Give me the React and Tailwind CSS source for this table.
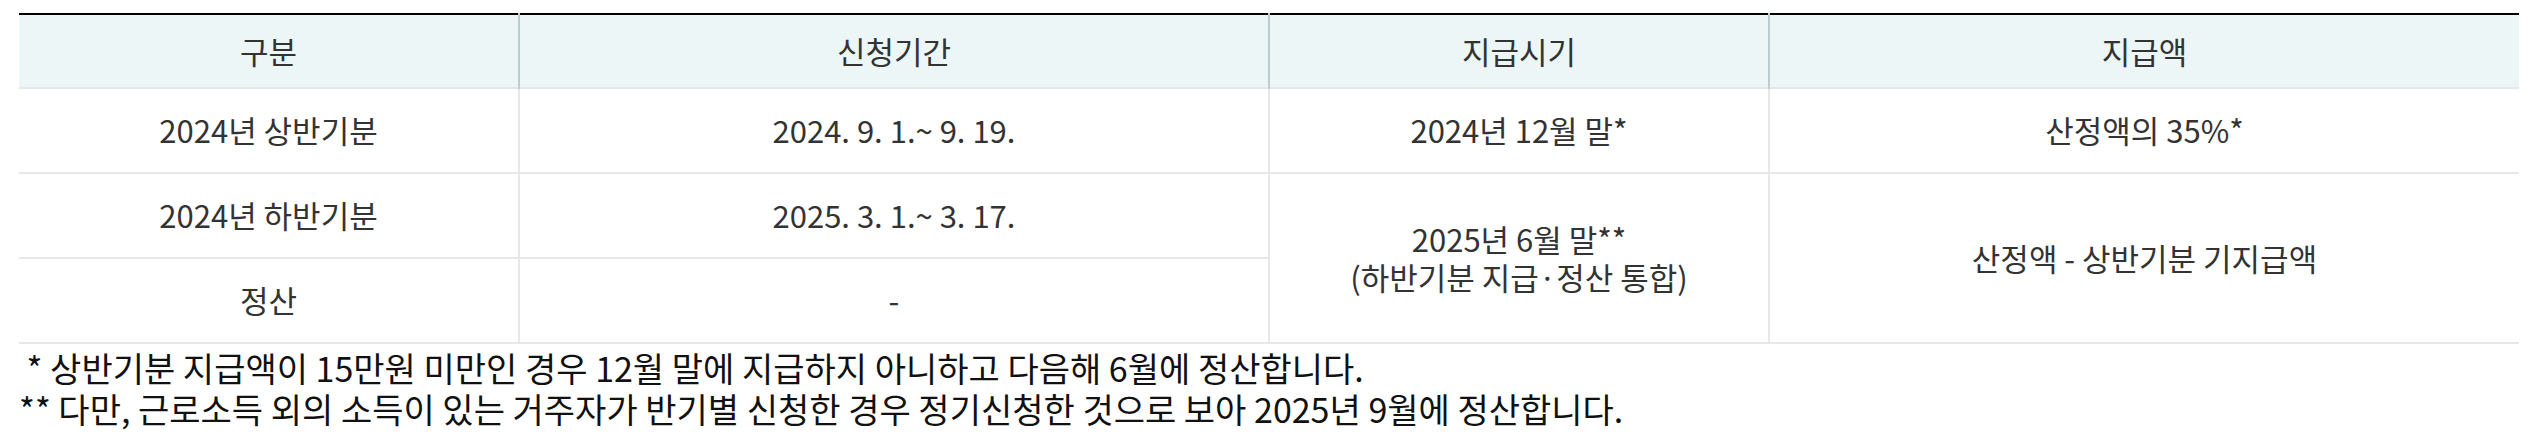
import React from "react";

const font = { fontFamily: '"Noto Sans CJK KR", "Noto Sans", sans-serif' };

export default function App() {
  const th =
    "h-[74px] border-x-2 border-[#bdcbd3] first:border-l-0 last:border-r-0 bg-[#ecf6f7] font-normal text-center align-middle";
  const td =
    "border-2 border-[#e8e8e8] first:border-l-0 text-center align-middle";

  return (
    <div
      className="w-[2536px] h-[436px] bg-white pl-[19px] pt-[13px] text-[#333]"
      style={font}
    >
      <table className="w-[2500px] table-fixed border-collapse border-t-2 border-black text-[31px]">
        <colgroup>
          <col className="w-[20%]" />
          <col className="w-[30%]" />
          <col className="w-[20%]" />
          <col className="w-[30%]" />
        </colgroup>
        <thead>
          <tr className="border-t border-b-2 border-[#bdcbd3]">
            <th className={th}>구분</th>
            <th className={th}>신청기간</th>
            <th className={th}>지급시기</th>
            <th className={th}>지급액</th>
          </tr>
        </thead>
        <tbody>
          <tr className="h-[85px]">
            <td className={td}>2024년 상반기분</td>
            <td className={td}>2024. 9. 1.~ 9. 19.</td>
            <td className={td}>2024년 12월 말*</td>
            <td className={td + " border-r-0"}>산정액의 35%*</td>
          </tr>
          <tr className="h-[85px]">
            <td className={td}>2024년 하반기분</td>
            <td className={td}>2025. 3. 1.~ 3. 17.</td>
            <td className={td + " leading-[38px]"} rowSpan={2}>
              2025년 6월 말**
              <br />
              (하반기분 지급·정산 통합)
            </td>
            <td className={td + " border-r-0"} rowSpan={2}>
              산정액 - 상반기분 기지급액
            </td>
          </tr>
          <tr className="h-[85px]">
            <td className={td}>정산</td>
            <td className={td}>-</td>
          </tr>
        </tbody>
      </table>
      <div className="mt-[3px] text-[34px] leading-[41px] text-[#111] whitespace-pre">
        <p>{" * 상반기분 지급액이 15만원 미만인 경우 12월 말에 지급하지 아니하고 다음해 6월에 정산합니다."}</p>
        <p>{"** 다만, 근로소득 외의 소득이 있는 거주자가 반기별 신청한 경우 정기신청한 것으로 보아 2025년 9월에 정산합니다."}</p>
      </div>
    </div>
  );
}
